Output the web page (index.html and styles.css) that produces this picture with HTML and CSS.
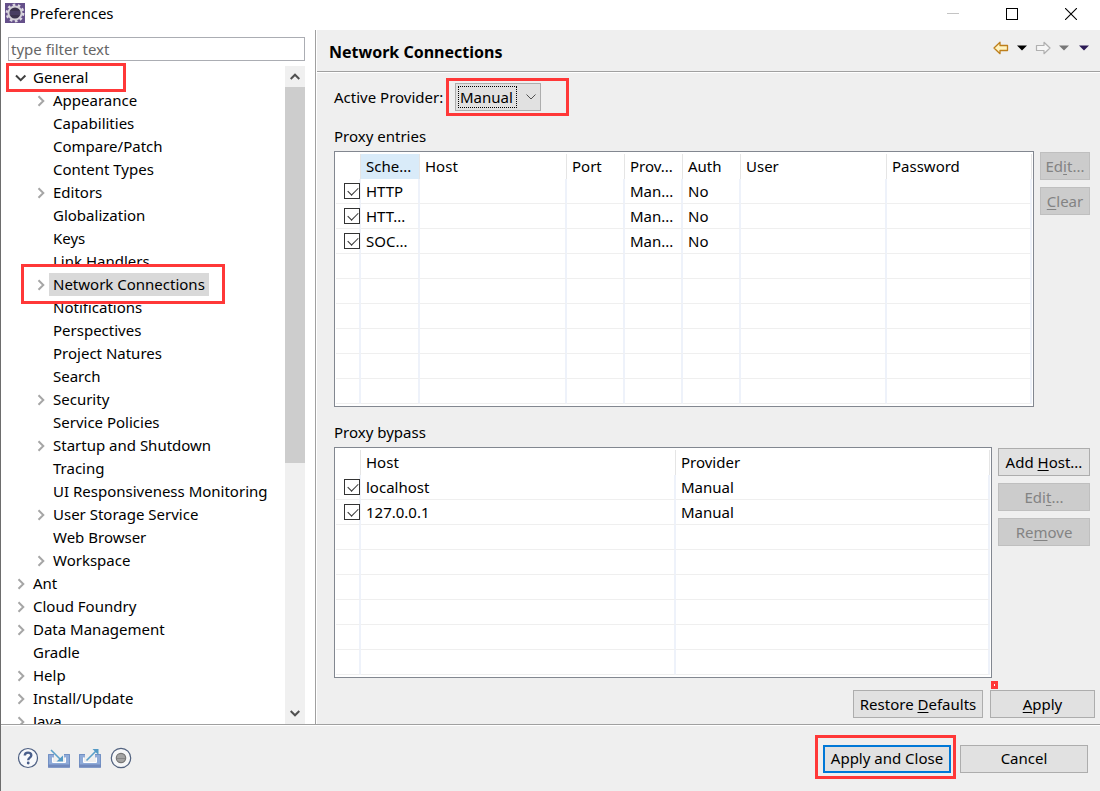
FILE: index.html
```html
<!DOCTYPE html>
<html lang="en">
<head>
<meta charset="utf-8">
<title>Preferences</title>
<link rel="stylesheet" href="styles.css">
</head>
<body>
<svg class="defs" width="0" height="0" aria-hidden="true">
  <symbol id="chev" viewBox="0 0 16 16"><path d="M5.500 3.200l4.800 4.800-4.800 4.800" fill="none" stroke="#a6a6a6" stroke-width="2"/></symbol>
</svg>
<div class="window">
  <header class="titlebar">
    <svg class="logo" width="20" height="20" viewBox="0 0 20 20" aria-hidden="true">
      <rect width="20" height="20" fill="#65508a"/>
      <circle cx="10" cy="10" r="8.200" fill="none" stroke="#dcd8e2" stroke-width="2.400" stroke-dasharray="2.600 2.550"/>
      <circle cx="10" cy="10" r="6.600" fill="#3b334d" stroke="#d4d1d8" stroke-width="2"/>
      <path d="M5 9h10M5 11h10" stroke="#574b78" stroke-width="1"/>
    </svg>
    <h1 class="title">Preferences</h1>
    <div class="winctl">
      <button aria-label="Minimize" disabled><svg width="12" height="12"><path d="M0 5.500h12" stroke="#c4c4c4"/></svg></button>
      <button aria-label="Maximize"><svg width="12" height="12"><rect x=".5" y=".5" width="11" height="11" fill="none" stroke="#000"/></svg></button>
      <button aria-label="Close"><svg width="12" height="12"><path d="M0 0l12 12M12 0L0 12" stroke="#000" stroke-width="1.100"/></svg></button>
    </div>
  </header>
  <div class="main">
    <nav class="sidebar">
      <input class="filter" type="text" placeholder="type filter text" aria-label="type filter text">
      <div class="treebox">
        <ul class="tree">
          <li><div class="row"><svg class="tw"><path d="M3 5.500l4.700 4.700 4.700-4.700" fill="none" stroke="#404040" stroke-width="2"/></svg><span>General</span></div>
            <ul>
              <li class="row"><svg class="tw"><use href="#chev"/></svg><span>Appearance</span></li>
              <li class="row leaf"><span>Capabilities</span></li>
              <li class="row leaf"><span>Compare/Patch</span></li>
              <li class="row leaf"><span>Content Types</span></li>
              <li class="row"><svg class="tw"><use href="#chev"/></svg><span>Editors</span></li>
              <li class="row leaf"><span>Globalization</span></li>
              <li class="row leaf"><span>Keys</span></li>
              <li class="row leaf"><span>Link Handlers</span></li>
              <li class="row"><svg class="tw"><use href="#chev"/></svg><span class="selected">Network Connections</span></li>
              <li class="row leaf"><span>Notifications</span></li>
              <li class="row leaf"><span>Perspectives</span></li>
              <li class="row leaf"><span>Project Natures</span></li>
              <li class="row leaf"><span>Search</span></li>
              <li class="row"><svg class="tw"><use href="#chev"/></svg><span>Security</span></li>
              <li class="row leaf"><span>Service Policies</span></li>
              <li class="row"><svg class="tw"><use href="#chev"/></svg><span>Startup and Shutdown</span></li>
              <li class="row leaf"><span>Tracing</span></li>
              <li class="row leaf"><span>UI Responsiveness Monitoring</span></li>
              <li class="row"><svg class="tw"><use href="#chev"/></svg><span>User Storage Service</span></li>
              <li class="row leaf"><span>Web Browser</span></li>
              <li class="row"><svg class="tw"><use href="#chev"/></svg><span>Workspace</span></li>
            </ul>
          </li>
          <li class="row"><svg class="tw"><use href="#chev"/></svg><span>Ant</span></li>
          <li class="row"><svg class="tw"><use href="#chev"/></svg><span>Cloud Foundry</span></li>
          <li class="row"><svg class="tw"><use href="#chev"/></svg><span>Data Management</span></li>
          <li class="row leaf"><span>Gradle</span></li>
          <li class="row"><svg class="tw"><use href="#chev"/></svg><span>Help</span></li>
          <li class="row"><svg class="tw"><use href="#chev"/></svg><span>Install/Update</span></li>
          <li class="row"><svg class="tw"><use href="#chev"/></svg><span>Java</span></li>
        </ul>
        <div class="scrollbar">
          <button aria-label="Scroll up"><svg width="10" height="7"><path d="M.7 6L5 1.700 9.300 6" fill="none" stroke="#505050" stroke-width="2"/></svg></button>
          <div class="track"><div class="thumb"></div></div>
          <button aria-label="Scroll down"><svg width="10" height="7"><path d="M.7 1L5 5.300 9.300 1" fill="none" stroke="#505050" stroke-width="2"/></svg></button>
        </div>
      </div>
    </nav>
    <main class="page">
      <div class="pagehead">
        <h2>Network Connections</h2>
        <div class="history">
          <button aria-label="Back"><svg width="16" height="14"><path d="M1 7L7 1.300V4.500H14.500V9.500H7V12.700Z" fill="#fff3c0" stroke="#bd7f1c" stroke-width="1.300" stroke-linejoin="round"/></svg></button>
          <button aria-label="Back history"><svg width="10" height="6"><path d="M0 .5h10L5 5.500z" fill="#000"/></svg></button>
          <button aria-label="Forward"><svg width="16" height="14"><path d="M15 7L9 1.300V4.500H1.500V9.500H9V12.700Z" fill="#f6f6f6" stroke="#b0b0b0" stroke-width="1.200" stroke-linejoin="round"/></svg></button>
          <button aria-label="Forward history"><svg width="10" height="6"><path d="M0 .5h10L5 5.500z" fill="#777"/></svg></button>
          <button aria-label="View menu"><svg width="10" height="6"><path d="M0 .5h10L5 5.500z" fill="#2b1a55"/></svg></button>
        </div>
      </div>
      <div class="content">
        <div class="provider">
          <label for="prov">Active Provider:</label>
          <div class="combo">
            <select id="prov"><option>Manual</option><option>Direct</option><option>Native</option></select>
            <span class="focus"></span>
            <svg class="drop" width="10" height="6"><path d="M.5 .5L5 5 9.500 .5" fill="none" stroke="#505050"/></svg>
            <i class="mark mark-combo"></i>
          </div>
        </div>
        <h3>Proxy entries</h3>
        <div class="pane">
          <div class="grid">
            <table class="entries">
              <colgroup><col class="c-check"><col class="c-scheme"><col class="c-lg"><col class="c-sm"><col class="c-sm"><col class="c-sm"><col class="c-user"><col></colgroup>
              <thead><tr><th></th><th class="sorted">Sche...</th><th>Host</th><th>Port</th><th>Prov...</th><th>Auth</th><th>User</th><th>Password</th></tr></thead>
              <tbody>
                <tr><td><input type="checkbox" checked aria-label="HTTP"></td><td>HTTP</td><td></td><td></td><td>Man...</td><td>No</td><td></td><td></td></tr>
                <tr><td><input type="checkbox" checked aria-label="HTTPS"></td><td>HTT...</td><td></td><td></td><td>Man...</td><td>No</td><td></td><td></td></tr>
                <tr><td><input type="checkbox" checked aria-label="SOCKS"></td><td>SOC...</td><td></td><td></td><td>Man...</td><td>No</td><td></td><td></td></tr>
                <tr><td></td><td></td><td></td><td></td><td></td><td></td><td></td><td></td></tr>
                <tr><td></td><td></td><td></td><td></td><td></td><td></td><td></td><td></td></tr>
                <tr><td></td><td></td><td></td><td></td><td></td><td></td><td></td><td></td></tr>
                <tr><td></td><td></td><td></td><td></td><td></td><td></td><td></td><td></td></tr>
                <tr><td></td><td></td><td></td><td></td><td></td><td></td><td></td><td></td></tr>
                <tr><td></td><td></td><td></td><td></td><td></td><td></td><td></td><td></td></tr>
              </tbody>
            </table>
          </div>
          <div class="side side-sm">
            <button class="btn" disabled>Ed<u>i</u>t...</button>
            <button class="btn" disabled><u>C</u>lear</button>
          </div>
        </div>
        <h3>Proxy bypass</h3>
        <div class="pane">
          <div class="grid">
            <table>
              <colgroup><col class="c-check"><col class="c-half"><col></colgroup>
              <thead><tr><th></th><th>Host</th><th>Provider</th></tr></thead>
              <tbody>
                <tr><td><input type="checkbox" checked aria-label="localhost"></td><td>localhost</td><td>Manual</td></tr>
                <tr><td><input type="checkbox" checked aria-label="127.0.0.1"></td><td>127.0.0.1</td><td>Manual</td></tr>
                <tr><td></td><td></td><td></td></tr>
                <tr><td></td><td></td><td></td></tr>
                <tr><td></td><td></td><td></td></tr>
                <tr><td></td><td></td><td></td></tr>
                <tr><td></td><td></td><td></td></tr>
                <tr><td></td><td></td><td></td></tr>
              </tbody>
            </table>
          </div>
          <div class="side side-lg">
            <button class="btn">Add <u>H</u>ost...</button>
            <button class="btn" disabled>Edi<u>t</u>...</button>
            <button class="btn" disabled>Re<u>m</u>ove</button>
          </div>
        </div>
      </div>
      <div class="pageactions">
        <button class="btn restore">Restore <u>D</u>efaults</button>
        <div class="holder"><button class="btn apply"><u>A</u>pply</button><i class="mark mark-dot"></i></div>
      </div>
    </main>
  </div>
  <footer class="footer">
    <div class="tools">
      <button aria-label="Help"><svg width="22" height="22"><circle cx="11" cy="11" r="9.500" fill="#f8f9fb" stroke="#4d5f82" stroke-width="1.200"/><path d="M7.800 8.600C7.800 4.600 14.300 4.700 14.300 8.300C14.300 10.700 11.300 10.600 11.200 13.200" fill="none" stroke="#4a5f8b" stroke-width="2.400"/><circle cx="11.200" cy="16" r="1.400" fill="#4a5f8b"/></svg></button>
      <button aria-label="Import"><svg width="22" height="22"><path d="M0 7h6v3.500H4.500V15h13v-4.500H16V7h6v13.500H0Z" fill="#8eaad8"/><path d="M6 7.500H.5V20h21V7.500H16" fill="none" stroke="#7391c4"/><path d="M0 19h22" stroke="#7189bd" stroke-width="3"/><path d="M4.500 10.500V15.500h13V10.500" fill="none" stroke="#fff"/><path d="M3 3L12 12" stroke="#5aa0ca" stroke-width="1.600"/><path d="M15 14.500H8.500L15 8.500Z" fill="#5399c5"/></svg></button>
      <button aria-label="Export"><svg width="22" height="22"><path d="M0 7h6v3.500H4.500V15h13v-4.500H16V7h6v13.500H0Z" fill="#8eaad8"/><path d="M6 7.500H.5V20h21V7.500H16" fill="none" stroke="#7391c4"/><path d="M0 19h22" stroke="#7189bd" stroke-width="3"/><path d="M4.500 10.500V15.500h13V10.500" fill="none" stroke="#fff"/><path d="M7.500 13.500L17 4" stroke="#5aa0ca" stroke-width="1.600"/><path d="M13.500 2H19.500V8Z" fill="#5399c5"/></svg></button>
      <button aria-label="Record"><svg width="22" height="22"><circle cx="11" cy="11" r="9.700" fill="#f6f7f8" stroke="#52627f" stroke-width="1.200"/><circle cx="11" cy="11" r="4.700" fill="#a3a3a3" stroke="#777" stroke-width="1.200"/><path d="M7 11.500h8" stroke="#858585"/></svg></button>
    </div>
    <div class="holder"><button class="btn wide primary">Apply and Close</button><i class="mark mark-close"></i></div>
    <button class="btn wide">Cancel</button>
  </footer>
  <i class="mark mark-general"></i>
  <i class="mark mark-network"></i>
</div>
</body>
</html>
```
FILE: styles.css
```css
* { box-sizing: border-box; }
body { margin: 0; font: 15px/23px "Noto Sans", "Open Sans", sans-serif; color: #000; }
button, input, select { font: inherit; color: inherit; margin: 0; }
button { padding: 0; border: 0; background: none; display: flex; align-items: center; justify-content: center; }
ul { list-style: none; margin: 0; padding: 0; }
h1, h2, h3 { margin: 0; font-size: 15px; font-weight: 400; }
.defs { position: absolute; }
.window { position: relative; display: flex; flex-direction: column; height: 100vh; min-height: 791px; background: #efefef; border-left: 1px solid #6d6d6d; overflow: hidden; }

.titlebar { display: flex; align-items: center; height: 30px; flex: none; background: #fff; padding-left: 4px; }
.logo { margin-bottom: 4px; }
.title { margin: 0 0 3px 5px; flex: 1; }
.winctl { display: flex; padding-bottom: 2px; }
.winctl button { width: 59px; height: 28px; }

.main { display: flex; flex: 1; min-height: 0; border-bottom: 1px solid #a0a0a0; }
.sidebar { display: flex; flex-direction: column; width: 315px; flex: none; background: #fff; border-right: 1px solid #a0a0a0; padding: 7px 10px 0 7px; }
.filter { height: 24px; flex: none; width: 100%; border: 1px solid #abadb3; padding: 0 2px; background: #fff; outline: 0; }
.filter::placeholder { color: #666; opacity: 1; }
.treebox { display: flex; flex: 1; min-height: 0; margin-top: 5px; }
.tree { flex: 1; min-width: 0; overflow: hidden; padding-left: 5px; }
.tree ul { padding-left: 20px; }
.row { display: flex; align-items: center; height: 23px; white-space: nowrap; }
.row span { padding: 0 4px; }
.row.leaf { padding-left: 16px; }
.tw { width: 16px; height: 16px; flex: none; }
.selected { background: #d9d9d9; }
.scrollbar { display: flex; flex-direction: column; width: 20px; background: #f0f0f0; }
.scrollbar button { height: 21px; }
.track { flex: 1; }
.thumb { height: 61%; background: #cdcdcd; }

.page { flex: 1; min-width: 0; display: flex; flex-direction: column; border-left: 1px solid #fff; }
.pagehead { display: flex; align-items: center; justify-content: space-between; height: 42px; flex: none; border-bottom: 1px solid #a0a0a0; box-shadow: 0 1px #fff; padding: 0 11px 0 12px; }
.pagehead h2 { font-size: 16px; font-weight: 700; padding-top: 3px; }
.history { display: flex; align-items: center; gap: 8px; padding-bottom: 6px; }
.history button:nth-child(5) { margin-left: 2px; }

.content { flex: 1; padding: 11px 10px 0 17px; }
.provider { display: flex; align-items: center; }
.provider label { min-width: 121px; }
.combo { position: relative; width: 86px; height: 28px; }
.combo select { appearance: none; width: 100%; height: 100%; border: 1px solid #adadad; border-radius: 0; background: #e1e1e1; padding: 0 4px; outline: 0; }
.focus { position: absolute; left: 3px; top: 3px; width: 59px; height: 22px; border: 1px dotted #000; pointer-events: none; }
.drop { position: absolute; right: 5px; top: 11px; pointer-events: none; }
.content h3 { margin: 14px 0 3px; }
.pane { display: flex; gap: 6px; align-items: flex-start; }
.grid { flex: 1; min-width: 0; border: 1px solid #828790; background: #fff; padding: 2px 1px; }
table { width: 100%; table-layout: fixed; border-collapse: separate; border-spacing: 0; }
.c-check { width: 25px; }
.c-scheme { width: 59px; }
.c-sm { width: 58px; }
.c-lg { width: 147px; }
.c-user { width: 146px; }
.c-half { width: 315px; }
th, td { height: 25px; padding: 0 0 0 5px; text-align: left; font-weight: 400; line-height: 22px; white-space: nowrap; border-right: 1px solid #e5e5e5; }
th { padding-bottom: 2px; }
td { border-right: 2px solid #eef2fa; border-bottom: 1px solid #efefef; }
th.sorted { background: #d9ebf9; }
th:first-child, td:first-child { padding-left: 8px; }
input[type="checkbox"] { appearance: none; display: block; width: 16px; height: 16px; border: 1px solid #333; background: #fff; position: relative; }
input[type="checkbox"]:checked::after { content: ""; position: absolute; left: 5px; top: 1px; width: 5px; height: 9px; border: solid #333; border-width: 0 1px 1px 0; transform: rotate(45deg); }
.side { display: flex; flex-direction: column; gap: 7px; padding-top: 1px; }
.side-sm { width: 50px; }
.side-lg { width: 92px; }
.btn { height: 28px; background: #e1e1e1; border: 1px solid #adadad; white-space: pre; }
.btn:disabled { background: #ccc; border-color: #bfbfbf; color: #838383; }
u { text-underline-offset: 2px; }
.pageactions { display: flex; justify-content: flex-end; gap: 7px; padding: 0 5px 6px 0; }
.restore { width: 130px; }
.apply { width: 105px; }
.holder { position: relative; }

.footer { display: flex; align-items: center; gap: 9px; height: 66px; flex: none; border-top: 1px solid #fff; padding: 0 12px 0 16px; }
.tools { display: flex; gap: 9px; margin-right: auto; padding-bottom: 2px; }
.wide { width: 128px; }
.primary { border: 2px solid #0078d7; }

.mark { position: absolute; border: 3px solid #ff3838; pointer-events: none; }
.mark-general { left: 5px; top: 63px; width: 120px; height: 29px; }
.mark-network { left: 20px; top: 264px; width: 204px; height: 40px; }
.mark-combo { left: -9px; top: -5px; width: 123px; height: 38px; }
.mark-dot { left: 1px; top: -9px; width: 7px; height: 8px; background: #fff; }
.mark-close { left: -8px; top: -10px; width: 141px; height: 44px; }
```
